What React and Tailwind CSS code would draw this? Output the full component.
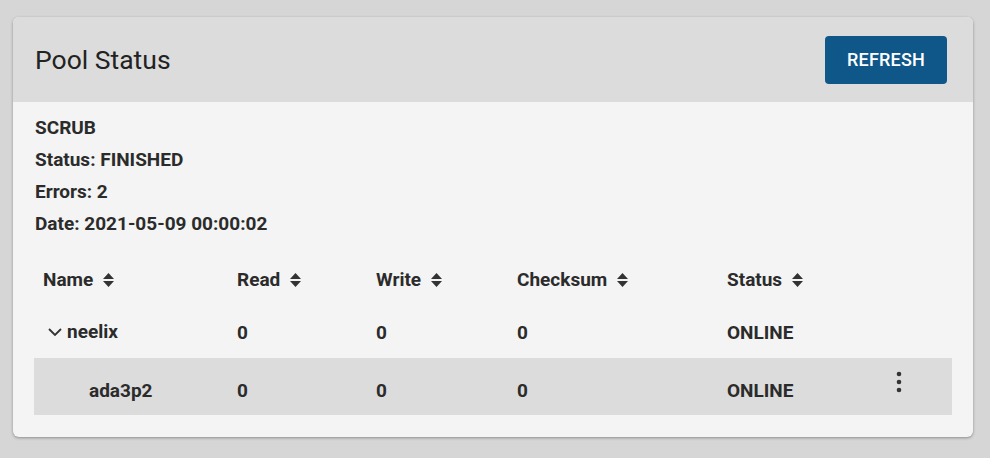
const SortIcon = () => (
  <svg width="13" height="16" viewBox="0 0 13 16" className="ml-[9px] inline-block">
    <path d="M6.5 1 L12 7 H1 Z M1 9 H12 L6.5 15 Z" fill="#333" />
  </svg>
);

const columns = ["Name", "Read", "Write", "Checksum", "Status"];

const rows = [
  { name: "neelix", read: 0, write: 0, checksum: 0, status: "ONLINE", parent: true },
  { name: "ada3p2", read: 0, write: 0, checksum: 0, status: "ONLINE", child: true },
];

const App = () => {
  return (
    <div className="min-h-screen bg-[#d6d6d6] pt-[17px] pl-[13px] pr-[17px] font-['Roboto',sans-serif] text-[#2b2b2b]">
      <div className="w-[960px] bg-[#f4f4f4] rounded-md shadow-[0_1px_3px_rgba(0,0,0,0.35)] overflow-hidden">
        <div className="h-[85px] bg-[#dcdcdc] flex items-center justify-between pl-[22px] pr-[26px]">
          <h2 className="text-[26.5px] text-[#222]">Pool Status</h2>
          <button className="w-[122px] h-[48px] rounded bg-[#0f5788] text-white text-[18px] font-medium tracking-[0.2px]">
            REFRESH
          </button>
        </div>

        <div className="px-[21px] pt-[10px] pb-[22px]">
          <div className="text-[19px] font-bold leading-[32px] pl-px">
            <div>SCRUB</div>
            <div>Status: FINISHED</div>
            <div>Errors: 2</div>
            <div>Date: 2021-05-09 00:00:02</div>
          </div>

          <table className="w-[918px] mt-[12px] text-[19px] font-bold border-collapse">
            <thead>
              <tr className="h-[56px]">
                {columns.map((c, i) => (
                  <th
                    key={c}
                    className={`text-left font-bold align-middle ${
                      i === 0 ? "pl-[9px] w-[203px]" : i === 1 ? "w-[139px]" : i === 2 ? "w-[141px]" : i === 3 ? "w-[210px]" : ""
                    }`}
                  >
                    <span className="inline-flex items-center">
                      {c}
                      <SortIcon />
                    </span>
                  </th>
                ))}
                <th></th>
              </tr>
            </thead>
            <tbody>
              <tr className="h-[50px]">
                <td className="pl-[13px]">
                  <span className="inline-flex items-center">
                    <svg width="16" height="16" viewBox="0 0 16 16" className="mr-[4px]">
                      <path d="M2 5 L8 11 L14 5" fill="none" stroke="#333" strokeWidth="1.8" />
                    </svg>
                    {rows[0].name}
                  </span>
                </td>
                <td>{rows[0].read}</td>
                <td>{rows[0].write}</td>
                <td>{rows[0].checksum}</td>
                <td>{rows[0].status}</td>
                <td className="w-[80px]"></td>
              </tr>
              <tr className="h-[57px] bg-[#dcdcdc]">
                <td className="pl-[55px] pt-[10px]">{rows[1].name}</td>
                <td className="pt-[10px]">{rows[1].read}</td>
                <td className="pt-[10px]">{rows[1].write}</td>
                <td className="pt-[10px]">{rows[1].checksum}</td>
                <td className="pt-[10px]">{rows[1].status}</td>
                <td className="w-[80px] align-top pt-[12px]">
                  {/* kebab menu */}
                  <svg width="8" height="24" viewBox="0 0 8 24" className="ml-[23px]">
                    <circle cx="4" cy="4" r="2.3" fill="#333" />
                    <circle cx="4" cy="12" r="2.3" fill="#333" />
                    <circle cx="4" cy="20" r="2.3" fill="#333" />
                  </svg>
                </td>
              </tr>
            </tbody>
          </table>
        </div>
      </div>
    </div>
  );
};

export default App;
